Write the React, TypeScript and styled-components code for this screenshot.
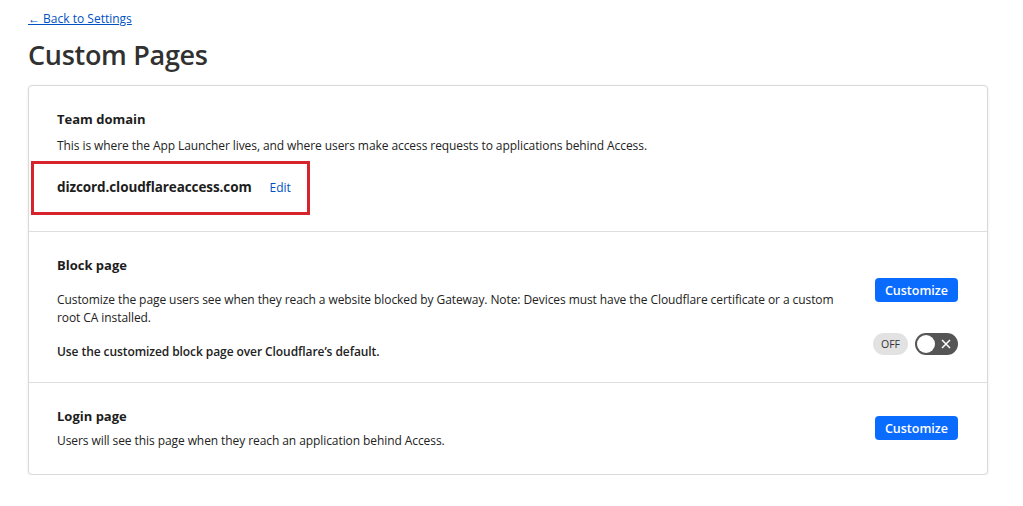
import React from "react";
import styled, { createGlobalStyle } from "styled-components";

const Global = createGlobalStyle`
  body {
    margin: 0;
    background: #ffffff;
    font-family: "Open Sans", "Noto Sans", Arial, sans-serif;
    color: #1d1d1d;
  }
`;

const Page = styled.div`
  padding: 6px 35px 0 28px;
  width: 960px;
`;

const BackLink = styled.a`
  display: inline-block;
  font-size: 12px;
  line-height: 18px;
  color: #0051c3;
  text-decoration: underline;
  cursor: pointer;
`;

const Title = styled.h1`
  margin: 9px 0 12px;
  font-size: 27px;
  line-height: 36px;
  font-weight: 600;
  color: #313131;
  letter-spacing: -0.3px;
`;

const Card = styled.div`
  border: 1px solid #d9d9d9;
  border-radius: 4px;
  box-shadow: 0 1px 3px rgba(0, 0, 0, 0.08);
  background: #fff;
`;

const Section = styled.div<{ $pad: string }>`
  display: flex;
  align-items: flex-start;
  justify-content: space-between;
  padding: ${(p) => p.$pad};
  & + & {
    border-top: 1px solid #dedede;
  }
`;

const Body = styled.div`
  flex: 1;
  max-width: 790px;
`;

const Heading = styled.h3`
  margin: 0;
  font-size: 13px;
  line-height: 18px;
  font-weight: 700;
  color: #1d1d1d;
`;

const Text = styled.p<{ $top: number; $weight?: number }>`
  margin: ${(p) => p.$top}px 0 0;
  font-size: 12px;
  line-height: 18px;
  letter-spacing: -0.08px;
  font-weight: ${(p) => p.$weight ?? 400};
  color: #222;
`;

const DomainBox = styled.div`
  display: inline-flex;
  align-items: center;
  gap: 18px;
  margin: 6px 0 0 -26px;
  padding: 14px 16px 16px 23px;
  border: 3px solid #d7232c;
`;

const Domain = styled.span`
  font-size: 13.5px;
  font-weight: 700;
  color: #1d1d1d;
  letter-spacing: -0.1px;
`;

const EditLink = styled.a`
  font-size: 12px;
  color: #0051c3;
  cursor: pointer;
`;

const Side = styled.div<{ $top: number }>`
  display: flex;
  flex-direction: column;
  align-items: flex-end;
  gap: 31px;
  margin-top: ${(p) => p.$top}px;
`;

const Button = styled.button`
  height: 24px;
  padding: 0 10px;
  border: none;
  border-radius: 4px;
  background: #0a6cff;
  color: #fff;
  font-family: inherit;
  font-size: 12.5px;
  font-weight: 600;
  cursor: pointer;
`;

const ToggleRow = styled.div`
  display: flex;
  align-items: center;
  gap: 7px;
`;

const OffPill = styled.span`
  display: inline-flex;
  align-items: center;
  justify-content: center;
  width: 35px;
  height: 22px;
  border-radius: 11px;
  background: #e2e2e2;
  font-size: 10.5px;
  color: #333;
`;

const Switch = styled.span`
  position: relative;
  display: inline-block;
  width: 43px;
  height: 22px;
  border-radius: 11px;
  background: #555555;
`;

const Knob = styled.span`
  position: absolute;
  top: 2px;
  left: 2px;
  width: 18px;
  height: 18px;
  border-radius: 50%;
  background: #fff;
`;

const Cross = styled.svg`
  position: absolute;
  right: 7px;
  top: 6px;
`;

export default function App() {
  return (
    <>
      <Global />
      <Page>
        <BackLink>← Back to Settings</BackLink>
        <Title>Custom Pages</Title>
        <Card>
          <Section $pad="24px 29px 16px 28px">
            <Body>
              <Heading>Team domain</Heading>
              <Text $top={9}>
                This is where the App Launcher lives, and where users make access requests to
                applications behind Access.
              </Text>
              <DomainBox>
                <Domain>dizcord.cloudflareaccess.com</Domain>
                <EditLink>Edit</EditLink>
              </DomainBox>
            </Body>
          </Section>
          <Section $pad="24px 29px 21px 28px">
            <Body>
              <Heading>Block page</Heading>
              <Text $top={17}>
                Customize the page users see when they reach a website blocked by Gateway. Note:
                Devices must have the Cloudflare certificate or a custom root CA installed.
              </Text>
              <Text $top={16} $weight={600}>
                Use the customized block page over Cloudflare’s default.
              </Text>
            </Body>
            <Side $top={22}>
              <Button>Customize</Button>
              <ToggleRow>
                <OffPill>OFF</OffPill>
                <Switch>
                  <Knob />
                  <Cross width="10" height="10" viewBox="0 0 10 10">
                    <path d="M1 1 L9 9 M9 1 L1 9" stroke="#fff" strokeWidth="1.5" />
                  </Cross>
                </Switch>
              </ToggleRow>
            </Side>
          </Section>
          <Section $pad="24px 29px 24px 28px">
            <Body>
              <Heading>Login page</Heading>
              <Text $top={7}>Users will see this page when they reach an application behind Access.</Text>
            </Body>
            <Side $top={9}>
              <Button>Customize</Button>
            </Side>
          </Section>
        </Card>
      </Page>
    </>
  );
}
